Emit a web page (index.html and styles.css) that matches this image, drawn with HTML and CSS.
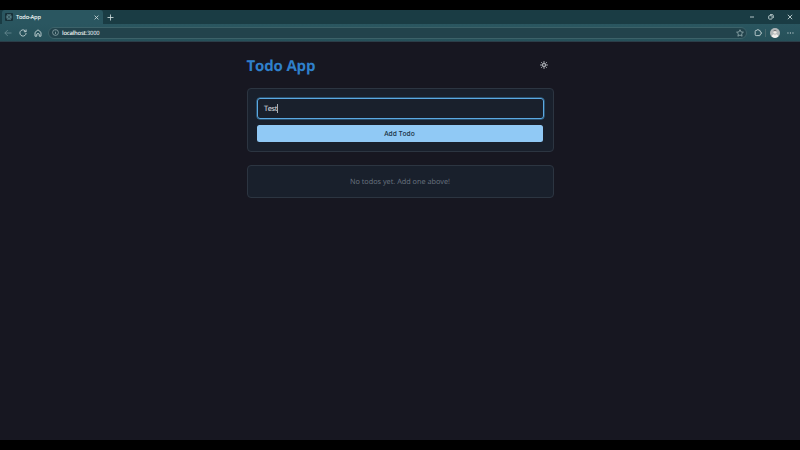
FILE: index.html
```html
<!DOCTYPE html>
<html lang="en">
<head>
<meta charset="utf-8">
<title>Todo-App</title>
<link rel="stylesheet" href="styles.css">
</head>
<body>
<div class="browser">
  <div class="tabbar">
    <div class="tab">
      <svg class="favicon" width="8" height="8" viewBox="0 0 8 8"><rect width="8" height="8" rx="1" fill="#173038"/><g fill="none" stroke="#608a91" stroke-width=".6"><ellipse cx="4" cy="4" rx="3" ry="1.2"/><ellipse cx="4" cy="4" rx="3" ry="1.2" transform="rotate(60 4 4)"/><ellipse cx="4" cy="4" rx="3" ry="1.2" transform="rotate(120 4 4)"/></g></svg>
      <span class="tab-title">Todo-App</span>
      <svg class="icon" width="5" height="5" viewBox="0 0 5 5"><path d="M.6.6l3.8 3.8M4.4.6L.6 4.4"/></svg>
    </div>
    <svg class="icon plus" width="7" height="7" viewBox="0 0 7 7"><path d="M3.5.5v6M.5 3.5h6"/></svg>
    <div class="controls">
      <svg class="icon" width="6" height="6" viewBox="0 0 6 6"><path d="M1 3h4"/></svg>
      <svg class="icon" width="6" height="6" viewBox="0 0 6 6"><rect x=".7" y="1.7" width="3.4" height="3.4" rx=".6"/><path d="M2 .6h2.2Q5.3.6 5.3 1.7V4"/></svg>
      <svg class="icon" width="6" height="6" viewBox="0 0 6 6"><path d="M.8.8l4.4 4.4M5.2.8L.8 5.2"/></svg>
    </div>
  </div>
  <div class="toolbar">
    <svg class="icon dim" width="8" height="8" viewBox="0 0 8 8"><path d="M7.5 4H.8M3.8 1l-3 3 3 3"/></svg>
    <svg class="icon" width="8" height="8" viewBox="0 0 8 8"><path d="M7.1 4A3.1 3.1 0 1 1 6.1 1.7L7 2.6M7.1.5v2.2H4.9"/></svg>
    <svg class="icon" width="8" height="8" viewBox="0 0 8 8"><path d="M1 3.4L4 .8l3 2.6v3.8H5.2V5Q4 3.8 2.8 5v2.2H1z"/></svg>
    <div class="address">
      <svg class="icon info" width="7" height="7" viewBox="0 0 7 7"><circle cx="3.5" cy="3.5" r="2.9"/><path d="M3.5 3v2.1M3.5 1.7v.6"/></svg>
      <span class="url">localhost<span class="port">:3000</span></span>
      <svg class="icon dim2" width="8" height="8" viewBox="0 0 8 8"><path d="M4 .7l1 2.2 2.4.3-1.8 1.6.5 2.4L4 6 1.9 7.2l.5-2.4L.6 3.2 3 2.9z"/></svg>
    </div>
    <svg class="icon" width="8" height="8" viewBox="0 0 8 8"><path d="M6.2 2.8V2Q6.2 1.4 5.6 1.4H4.8a.9.9 0 0 0-1.8 0H2.2Q1.2 1.4 1.2 2.4v3.2q0 1 1 1H5.6q.6 0 .6-.6V5.3a1.2 1.2 0 0 0 0-2.5"/></svg>
    <span class="separator"></span>
    <svg class="avatar" width="10" height="10" viewBox="0 0 10 10"><circle cx="5" cy="5" r="5" fill="#b1b7b9"/><path d="M1.8 8.8Q2 6 5 6t3.2 2.8Q5 11 1.8 8.8" fill="#f2efed"/><circle cx="5" cy="3.9" r="1.8" fill="#eee9e5"/><path d="M3.2 3.6Q3 1.7 5 1.7t1.8 1.9Q5 2.4 3.2 3.6M4.5 6.2h1L5 7.5z" fill="#77777a"/></svg>
    <svg class="icon more" width="7" height="4" viewBox="0 0 7 4"><path d="M.4 2h1.1M2.9 2H4M5.4 2h1.1"/></svg>
  </div>
</div>
<main>
  <header>
    <h1>Todo App</h1>
    <svg class="sun" width="8" height="8" viewBox="0 0 8 8"><circle cx="4" cy="4" r="1.5"/><path d="M4 .2v1.7M4 6.1v1.7M.2 4h1.7M6.1 4h1.7M1.3 1.3l1.2 1.2M5.5 5.5l1.2 1.2M6.7 1.3L5.5 2.5M2.5 5.5L1.3 6.7"/></svg>
  </header>
  <section class="card form">
    <div class="field"><span class="value">Test</span><span class="caret"></span></div>
    <button>Add Todo</button>
  </section>
  <section class="card empty"><span>No todos yet. Add one above!</span></section>
</main>
</body>
</html>
```
FILE: styles.css
```css
* { box-sizing: border-box; }
body {
  margin: 0;
  height: 450px;
  overflow: hidden;
  display: flex;
  flex-direction: column;
  border-top: 10px solid #000;
  border-bottom: 10px solid #000;
  background: #171721;
  font-family: "Open Sans", "Noto Sans", sans-serif;
  text-rendering: geometricPrecision;
}
svg { display: block; flex: none; }
.icon { fill: none; stroke: #ccdadc; stroke-width: .85; }
.dim { stroke: #668990; }
.dim2 { stroke: #91aaae; }
.info { stroke: #9fb4b8; stroke-width: .7; }
.browser { height: 32px; flex: none; border-bottom: 1px solid #2b3e49; color: #edf3f3; }
.tabbar { height: 14px; display: flex; align-items: center; background: #1a3c44; }
.tab {
  width: 101px;
  height: 14px;
  margin-left: 2px;
  padding: 0 4px 0 3px;
  display: flex;
  align-items: center;
  background: #2a5660;
  border-radius: 3px 3px 0 0;
}
.tab-title { flex: 1; margin-left: 3px; font-size: 5.7px; line-height: 12px; letter-spacing: -.35px; white-space: nowrap; font-weight: 600; letter-spacing: -.2px; }
.plus { margin-left: 4px; }
.controls { margin-left: auto; margin-right: 7px; display: flex; gap: 13px; }
.toolbar {
  height: 17px;
  padding: 0 6px 0 4px;
  display: flex;
  align-items: center;
  gap: 7px;
  background: linear-gradient(#2a5660, #265059);
}
.address {
  width: 699px;
  height: 12px;
  padding: 0 2px 0 3px;
  margin-left: -1px;
  display: flex;
  align-items: center;
  border: 1px solid #3c6269;
  border-radius: 6px;
  background: #22434c;
}
.url { flex: 1; margin-left: 3px; font-size: 5.9px; line-height: 10px; letter-spacing: -.24px; font-weight: 600; }
.port { color: #c4d1d4; }
.separator { width: 1px; height: 8px; margin: 0 -4px; background: #47666c; }
.avatar { margin-left: 1px; }
.more { margin-left: 0; stroke-width: 1; }
main { width: 307.5px; margin: 0 0 0 246.5px; padding-top: 12px; }
header { height: 34px; display: flex; justify-content: space-between; padding: 0 6px 0 0; }
h1 { margin: 1px 0 0; color: #2f80cb; font-size: 15px; line-height: 23px; font-weight: 700; letter-spacing: -.15px; }
.sun { margin-top: 7px; fill: none; stroke: #cdd1d6; stroke-width: .9; }
.card { width: 307px; border: 1px solid #2c3541; border-radius: 4px; background: #19202c; }
.form { height: 64px; padding: 9px; }
.field {
  width: 287px;
  height: 21px;
  padding: 0 6.5px;
  display: flex;
  align-items: center;
  border: 1px solid #5ba9e2;
  box-shadow: 0 0 0 .5px #397ead;
  border-radius: 3px;
}
.value { color: #e4e8ec; font-size: 7.4px; line-height: 16px; letter-spacing: -.3px; }
.caret { width: 1px; height: 9px; background: #a6acb3; }
button {
  display: block;
  width: 286px;
  height: 17px;
  margin: 6px 0 0;
  padding: 0;
  border: 0;
  border-radius: 2.5px;
  background: #90c9f5;
  color: #20364a;
  font: 600 6.7px/17px "Open Sans", "Noto Sans", sans-serif;
}
.empty { height: 33px; margin-top: 13px; color: #6a7480; font-size: 7.3px; line-height: 32px; text-align: center; }
```
